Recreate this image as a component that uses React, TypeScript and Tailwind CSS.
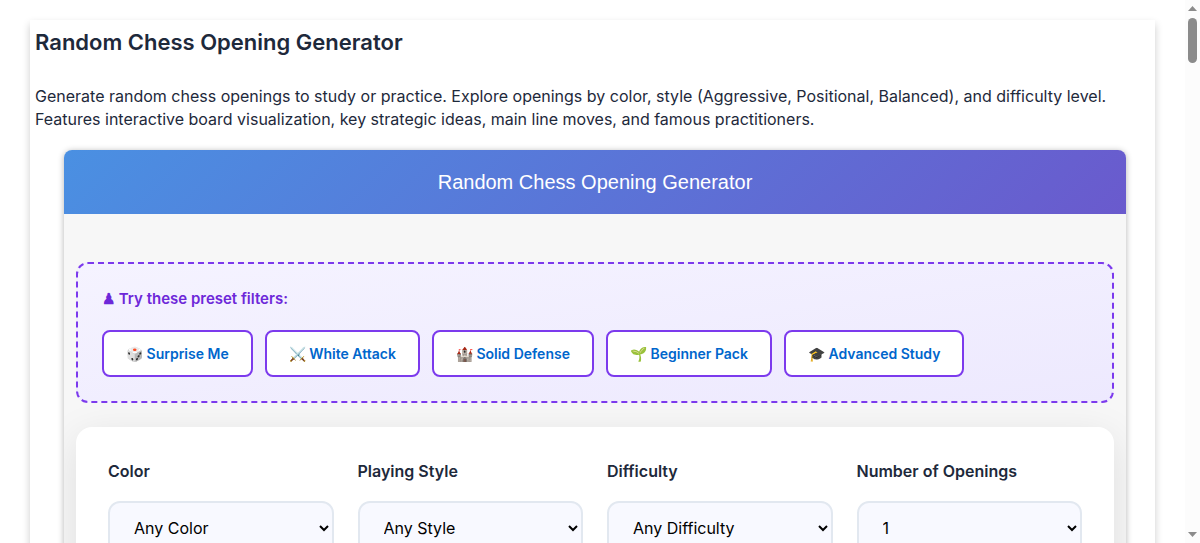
import { useState } from "react";

const PRESETS = [
  { icon: "🎲", label: "Surprise Me", values: ["Any Color", "Any Style", "Any Difficulty", "1"] },
  { icon: "⚔️", label: "White Attack", values: ["White", "Aggressive", "Any Difficulty", "3"] },
  { icon: "🏰", label: "Solid Defense", values: ["Black", "Positional", "Any Difficulty", "3"] },
  { icon: "🌱", label: "Beginner Pack", values: ["Any Color", "Any Style", "Beginner", "5"] },
  { icon: "🎓", label: "Advanced Study", values: ["Any Color", "Any Style", "Advanced", "3"] },
];

const FILTERS = [
  { id: "color", label: "Color", options: ["Any Color", "White", "Black"] },
  { id: "style", label: "Playing Style", options: ["Any Style", "Aggressive", "Positional", "Balanced"] },
  { id: "difficulty", label: "Difficulty", options: ["Any Difficulty", "Beginner", "Intermediate", "Advanced"] },
  { id: "count", label: "Number of Openings", options: ["1", "3", "5"] },
];

function ScrollRail() {
  return (
    <div className="flex w-[15px] shrink-0 flex-col items-center bg-[#fcfcfc] py-1.5" aria-hidden="true">
      <svg width="9" height="5" viewBox="0 0 9 5" className="shrink-0"><path d="M0 5L4.5 0L9 5Z" fill="#8b8b8b" /></svg>
      <div className="mt-[7px] h-[45px] w-[9px] shrink-0 rounded-full bg-[#8b8b8b]" />
      <svg width="9" height="5" viewBox="0 0 9 5" className="mt-auto shrink-0"><path d="M0 0L4.5 5L9 0Z" fill="#8b8b8b" /></svg>
    </div>
  );
}

export default function App() {
  const [values, setValues] = useState(PRESETS[0].values);

  return (
    <div className="flex h-screen overflow-hidden bg-white font-['Inter','Liberation_Sans',sans-serif] text-[#1e293b]">
      <main className="min-w-0 flex-1 overflow-y-auto px-[30px] pt-5 [scrollbar-width:none]">
        <article className="bg-white p-[5px] shadow-[0_4px_8px_rgba(0,0,0,0.2)]">
          <h1 className="text-[22px] leading-[34px] font-semibold">Random Chess Opening Generator</h1>
          <p className="mt-[26px] text-base leading-[23px]">
            Generate random chess openings to study or practice. Explore openings by color, style (Aggressive,
            Positional, Balanced), and difficulty level. Features interactive board visualization, key strategic
            ideas, main line moves, and famous practitioners.
          </p>

          <section className="mt-[19px] mr-6 ml-[29px] overflow-hidden rounded-lg bg-[#f7f7f7] shadow-[0_1px_6px_rgba(0,0,0,0.3)]">
            <h2 className="bg-[linear-gradient(135deg,#4a90e2,#6a5acd)] py-4 text-center font-['Liberation_Sans',sans-serif] text-xl leading-8 font-normal text-white">
              Random Chess Opening Generator
            </h2>

            <div className="px-3 pt-12 pb-6">
              {/* Presets */}
              <div className="rounded-xl border-2 border-dashed border-[#7c3aed] bg-[linear-gradient(to_bottom_right,#f5f3ff,#ede9fe)] p-6">
                <h3 className="text-[15px] leading-[22px] font-semibold text-[#6d28d9]">♟ Try these preset filters:</h3>
                <div className="mt-5 flex flex-wrap gap-3">
                  {PRESETS.map((preset) => (
                    <button
                      key={preset.label}
                      type="button"
                      onClick={() => setValues(preset.values)}
                      className="rounded-lg border-2 border-[#7c3aed] bg-white px-[22px] py-2.5 text-sm leading-[23px] font-semibold text-[#0066cc]"
                    >
                      {preset.icon} {preset.label}
                    </button>
                  ))}
                </div>
              </div>

              {/* Filters */}
              <form className="mt-6 grid grid-cols-4 gap-6 rounded-2xl bg-white p-8 shadow-[0_10px_40px_rgba(0,0,0,0.1)]">
                {FILTERS.map((filter, i) => (
                  <div key={filter.id} className="flex min-w-0 flex-col gap-[18px]">
                    <label htmlFor={filter.id} className="text-base leading-6 font-semibold">{filter.label}</label>
                    <select
                      id={filter.id}
                      value={values[i]}
                      onChange={(e) => setValues(values.map((v, n) => (n === i ? e.target.value : v)))}
                      className="h-[54px] w-full rounded-xl border-2 border-[#e2e8f0] bg-[#f8f9ff] pl-5 text-base text-black"
                    >
                      {filter.options.map((option) => (
                        <option key={option}>{option}</option>
                      ))}
                    </select>
                  </div>
                ))}
              </form>
            </div>
          </section>
        </article>
      </main>
      <ScrollRail />
    </div>
  );
}
